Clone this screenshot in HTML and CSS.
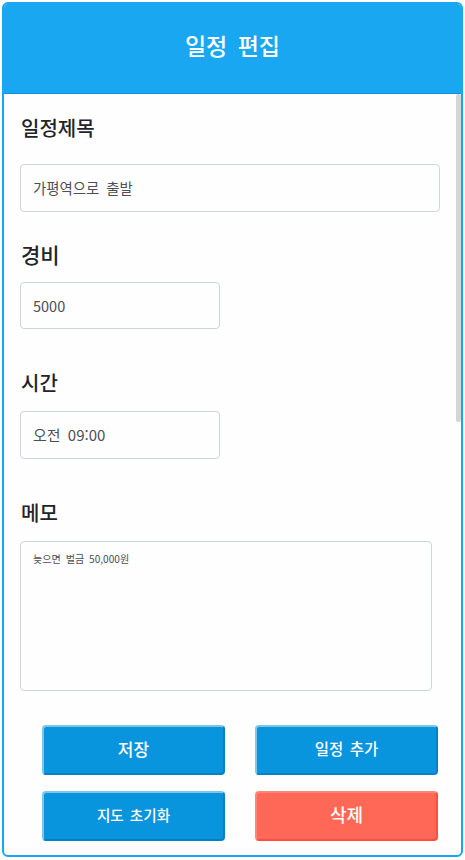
FILE: index.html
```html
<!DOCTYPE html>
<html lang="ko">
<head>
<meta charset="utf-8">
<title>일정 편집</title>
<link rel="stylesheet" href="styles.css">
</head>
<body>
<main class="panel">
  <header class="panel-header"><h1>일정 편집</h1></header>
  <form class="panel-body">
    <div class="scrollbar"></div>
    <div class="field field-title">
      <label for="title">일정제목</label>
      <input id="title" type="text" value="가평역으로 출발">
    </div>
    <div class="field field-cost">
      <label for="cost">경비</label>
      <input id="cost" type="text" value="5000">
    </div>
    <div class="field field-time">
      <label for="time">시간</label>
      <input id="time" type="text" value="오전 09:00">
    </div>
    <div class="field field-memo">
      <label for="memo">메모</label>
      <textarea id="memo">늦으면 벌금 50,000원</textarea>
    </div>
    <div class="actions">
      <button class="btn btn-save" type="button">저장</button>
      <button class="btn btn-add" type="button">일정 추가</button>
      <button class="btn btn-reset" type="button">지도 초기화</button>
      <button class="btn btn-delete" type="button">삭제</button>
    </div>
  </form>
</main>
</body>
</html>
```
FILE: styles.css
```css
* { box-sizing: border-box; }

body {
  margin: 0;
  padding: 2px;
  background: #fff;
  font-family: "Nanum Pen Script", "Noto Sans CJK KR", sans-serif;
}

.panel {
  width: 461px;
  height: 855px;
  border: 2px solid #1aa7f2;
  border-radius: 6px;
  background: #fefefe;
  overflow: hidden;
}

.panel-header {
  display: flex;
  align-items: center;
  justify-content: center;
  height: 90px;
  padding-bottom: 8px;
  background: #1aa7f2;
  border-bottom: 1px solid #0994de;
}

.panel-header h1 {
  margin: 0;
  color: #fff;
  font-size: 23px;
  font-weight: 500;
  line-height: 28px;
  word-spacing: 4px;
}

.panel-body {
  position: relative;
  padding: 0 16px;
}

.scrollbar {
  position: absolute;
  top: 0;
  right: 0;
  width: 5px;
  height: 328px;
  border-radius: 2px;
  background: #d6d6d6;
}

.field {
  display: flex;
  flex-direction: column;
  align-items: flex-start;
}

.field label {
  margin-bottom: 14px;
  padding-left: 1px;
  color: #212529;
  font-size: 20px;
  font-weight: 500;
  line-height: 28px;
}

.field input,
.field textarea {
  display: block;
  margin: 0;
  padding: 0 12px 1px;
  border: 1px solid #ced4da;
  border-radius: 4px;
  background: #fefefe;
  color: #495057;
  font-family: inherit;
  font-size: 15px;
  word-spacing: 3px;
  outline: none;
}

.field input { width: 200px; height: 48px; }

.field-title { padding-top: 20px; }
.field-title label { margin-bottom: 22px; }
.field-title input { width: 420px; font-size: 14.4px; }

.field-cost { padding-top: 28px; }
.field-cost label { margin-bottom: 14px; font-size: 21px; }
.field-cost input { height: 47px; font-size: 14.5px; }

.field-time,
.field-memo { padding-top: 40px; }

.field textarea {
  width: 412px;
  height: 150px;
  padding: 8px 12px;
  font-size: 10.1px;
  line-height: 18px;
  word-spacing: 2px;
  resize: none;
}

.actions {
  display: grid;
  grid-template-columns: 183px 183px;
  gap: 16px 30px;
  margin: 34px 0 0 22px;
}

.btn {
  height: 50px;
  padding: 0 0 4px;
  border: 2px solid;
  border-color: #7ac7e8 #0581c4 #0581c4 #7ac7e8;
  border-radius: 4px;
  background: #0994de;
  color: #fff;
  font-family: inherit;
  font-size: 15.5px;
  font-weight: 500;
  word-spacing: 2px;
}

.btn-save { font-size: 17px; }
.btn-reset { font-size: 14.6px; }

.btn-delete {
  border-color: #ff8578 #ff4e3e #ff4e3e #ff8578;
  background: #ff6757;
  font-size: 18px;
}
```
